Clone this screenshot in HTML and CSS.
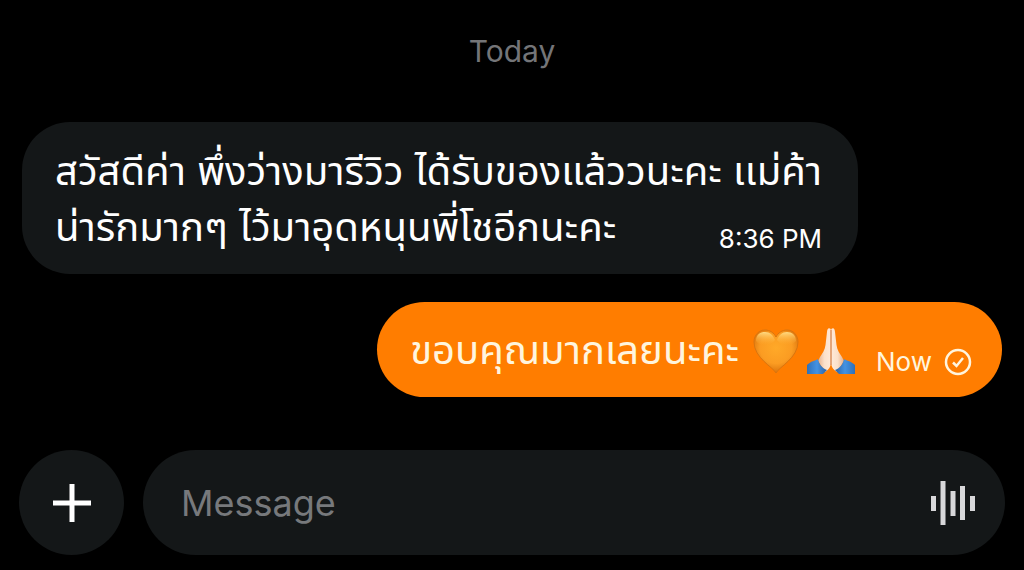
FILE: index.html
```html
<!DOCTYPE html>
<html lang="th">
<head>
<meta charset="utf-8">
<meta name="viewport" content="width=device-width, initial-scale=1">
<title>Chat</title>
<link rel="stylesheet" href="styles.css">
</head>
<body>
<main class="chat">
  <div class="day">Today</div>
  <section class="bubble bubble-in">
    <p class="text">สวัสดีค่า พึ่งว่างมารีวิว ได้รับของแล้ววนะคะ เเม่ค้า</p>
    <div class="last-line">
      <p class="text">น่ารักมากๆ ไว้มาอุดหนุนพี่โชอีกนะคะ</p>
      <time class="time">8:36 PM</time>
    </div>
  </section>
  <section class="bubble bubble-out">
    <p class="text">ขอบคุณมากเลยนะคะ</p>
    <span class="emojis">
      <svg class="emoji" viewBox="0 0 48 48" role="img" aria-label="Orange heart">
        <defs>
          <radialGradient id="heart" cx="50%" cy="42%" r="60%">
            <stop offset="0" stop-color="#ffa928"/><stop offset=".6" stop-color="#fb9c22"/><stop offset="1" stop-color="#d8700a"/>
          </radialGradient>
          <linearGradient id="shine" x1="0" y1="0" x2="0" y2="1">
            <stop offset="0" stop-color="#ffdc84"/><stop offset="1" stop-color="#ffac30" stop-opacity="0"/>
          </linearGradient>
        </defs>
        <path fill="url(#heart)" stroke="#d9750f" stroke-width="1" d="M23 47C20 41 1 32 1 16C1 9 6 4 12 4C17 4 21 7 23 11C25 7 29 4 34 4C40 4 45 9 45 16C45 32 26 41 23 47Z"/>
        <path fill="url(#shine)" d="M3 15C3 9 7 6 12 6C17 6 20 9 22 14C18 20 7 21 3 15ZM24 14C26 9 29 6 34 6C39 6 43 9 43 15C39 21 28 20 24 14Z"/>
      </svg>
      <svg class="emoji" viewBox="0 0 48 48" role="img" aria-label="Folded hands">
        <defs>
          <linearGradient id="skin" x1="0" y1="0" x2="1" y2="0">
            <stop offset="0" stop-color="#e8b08a"/><stop offset=".5" stop-color="#fbe0ca"/><stop offset="1" stop-color="#ffe9d8"/>
          </linearGradient>
          <linearGradient id="sleeve" x1="0" y1="0" x2="1" y2="0">
            <stop offset="0" stop-color="#2f70b8"/><stop offset=".5" stop-color="#4492e2"/><stop offset="1" stop-color="#2c62a4"/>
          </linearGradient>
        </defs>
        <g id="hand">
          <path fill="url(#skin)" d="M23.700 3C21.500 1 20.200 3 20 6L18.500 19C18 24 15 28 13 31L11 35L18 46C22 43 23.700 41 23.700 37Z"/>
          <path fill="url(#sleeve)" d="M0 39C4 35 8 35 11 33C12 38 15 42 20 44L16 48H0Z"/>
        </g>
        <use href="#hand" transform="matrix(-1 0 0 1 48 0)"/>
        <path stroke="#c98460" stroke-width="1" d="M24 4V39"/>
      </svg>
    </span>
    <span class="status">
      <time class="time">Now</time>
      <svg class="check" viewBox="0 0 28 28" fill="none" stroke="currentColor" stroke-width="2.500" role="img" aria-label="Sent">
        <circle cx="14" cy="14" r="12"/><path d="M9 14.500L12.500 18L19 10"/>
      </svg>
    </span>
  </section>
  <form class="composer">
    <button class="add" type="button" aria-label="Add attachment">
      <svg class="plus" viewBox="0 0 40 40" fill="none" stroke="currentColor" stroke-width="5"><path d="M20 1V39M1 20H39"/></svg>
    </button>
    <div class="field">
      <input class="input" type="text" placeholder="Message" aria-label="Message">
      <button class="voice" type="button" aria-label="Record voice message">
        <svg class="wave" viewBox="0 0 44 44" fill="currentColor"><path d="M0 15h5v15H0zM9.500 0h5v44h-5zM19.500 10h5v25h-5zM29 5h5v34h-5zM39 15h5v15h-5z"/></svg>
      </button>
    </div>
  </form>
</main>
</body>
</html>
```
FILE: styles.css
```css
* { box-sizing: border-box; }
body {
  margin: 0;
  background: #000;
  color: #fff;
  font-family: Inter, "Noto Sans Thai", "Noto Sans", sans-serif;
}
.chat {
  display: flex;
  flex-direction: column;
  padding: 31px 19px 15px;
}
.day {
  align-self: center;
  color: #747578;
  font-size: 30px;
  line-height: 40px;
}
.bubble {
  padding: 21px 36px 19px 33px;
}
.bubble-in {
  align-self: flex-start;
  margin: 51px 0 0 3px;
  background: #141718;
  border-radius: 48px;
}
.bubble-out {
  align-self: flex-end;
  display: flex;
  align-items: center;
  margin: 28px 3px 0 0;
  padding: 20px 30px 19px 33px;
  background: #ff7d00;
  border-radius: 48px;
  color: #fff5de;
}
.text {
  margin: 0;
  font-size: 40px;
  line-height: 56px;
  white-space: nowrap;
}
.last-line {
  display: flex;
  align-items: flex-end;
  justify-content: space-between;
}
.time {
  font-size: 26px;
  line-height: 32px;
}
.emojis {
  display: flex;
  gap: 6px;
  margin-left: 14px;
}
.emoji {
  width: 48px;
  height: 48px;
}
.status {
  display: flex;
  align-items: center;
  align-self: flex-end;
  gap: 12px;
  margin-left: 21px;
}
.check {
  width: 28px;
  height: 28px;
}
.composer {
  display: flex;
  gap: 19px;
  margin-top: 53px;
}
.add {
  display: grid;
  place-items: center;
  flex: none;
  width: 105px;
  height: 105px;
  padding: 0;
  border: 0;
  border-radius: 50%;
  background: #141718;
  color: #fff;
}
.plus {
  width: 40px;
  height: 40px;
}
.field {
  flex: 1;
  display: flex;
  align-items: center;
  padding: 0 30px 0 38px;
  border-radius: 53px;
  background: #141718;
}
.input {
  flex: 1;
  min-width: 0;
  padding: 0;
  border: 0;
  outline: 0;
  background: transparent;
  color: #fff;
  font: inherit;
  font-size: 36px;
}
.input::placeholder {
  color: #77797c;
  opacity: 1;
}
.voice {
  padding: 0;
  border: 0;
  background: transparent;
  color: #d8d8da;
}
.wave {
  display: block;
  width: 44px;
  height: 44px;
}
```
